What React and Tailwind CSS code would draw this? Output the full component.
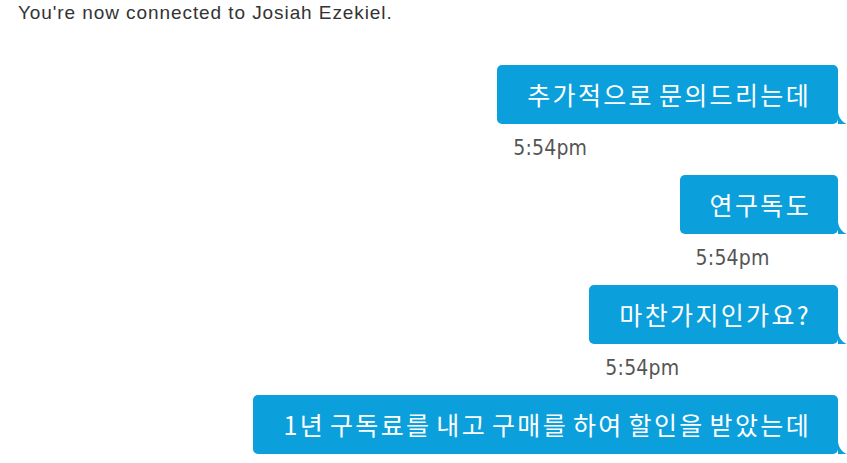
import React from "react";

const messages = [
  "추가적으로 문의드리는데",
  "연구독도",
  "마찬가지인가요?",
  "1년 구독료를 내고 구매를 하여 할인을 받았는데",
];

function Tail() {
  return (
    <svg
      className="absolute right-[-9px] bottom-0"
      width="9"
      height="12"
      viewBox="0 0 9 12"
    >
      <path d="M0 0 C1 6 4 10 9 12 L0 12 Z" fill="#0b9fdc" />
    </svg>
  );
}

function Message({ text, last }) {
  return (
    <div className="flex flex-col items-start self-end">
      <div className="relative rounded-[5px] bg-[#0b9fdc] pl-[30px] pr-[27px] py-[12px] text-[25px] leading-[35px] tracking-[2.35px] [word-spacing:-3px] text-white font-['Noto_Sans_CJK_KR',sans-serif] whitespace-nowrap">
        {text}
        <Tail />
      </div>
      {!last && (
        <div className="pl-[16px] pt-[12px] h-[51px] text-[21px] leading-[25px] tracking-[0.2px] text-[#555] font-['DejaVu_Sans_Condensed','Roboto',sans-serif]">
          5:54pm
        </div>
      )}
    </div>
  );
}

export default function App() {
  return (
    <div className="w-[847px] h-[463px] overflow-hidden bg-white">
      <div className="pl-[18px] pt-[2px] text-[19px] leading-[22px] tracking-[0.92px] text-[#333] font-['Liberation_Sans',Arial,sans-serif]">
        You're now connected to Josiah Ezekiel.
      </div>
      <div className="flex flex-col items-end pr-[9px] pt-[41px]">
        {messages.map((m, i) => (
          <Message key={i} text={m} last={i === messages.length - 1} />
        ))}
      </div>
    </div>
  );
}
